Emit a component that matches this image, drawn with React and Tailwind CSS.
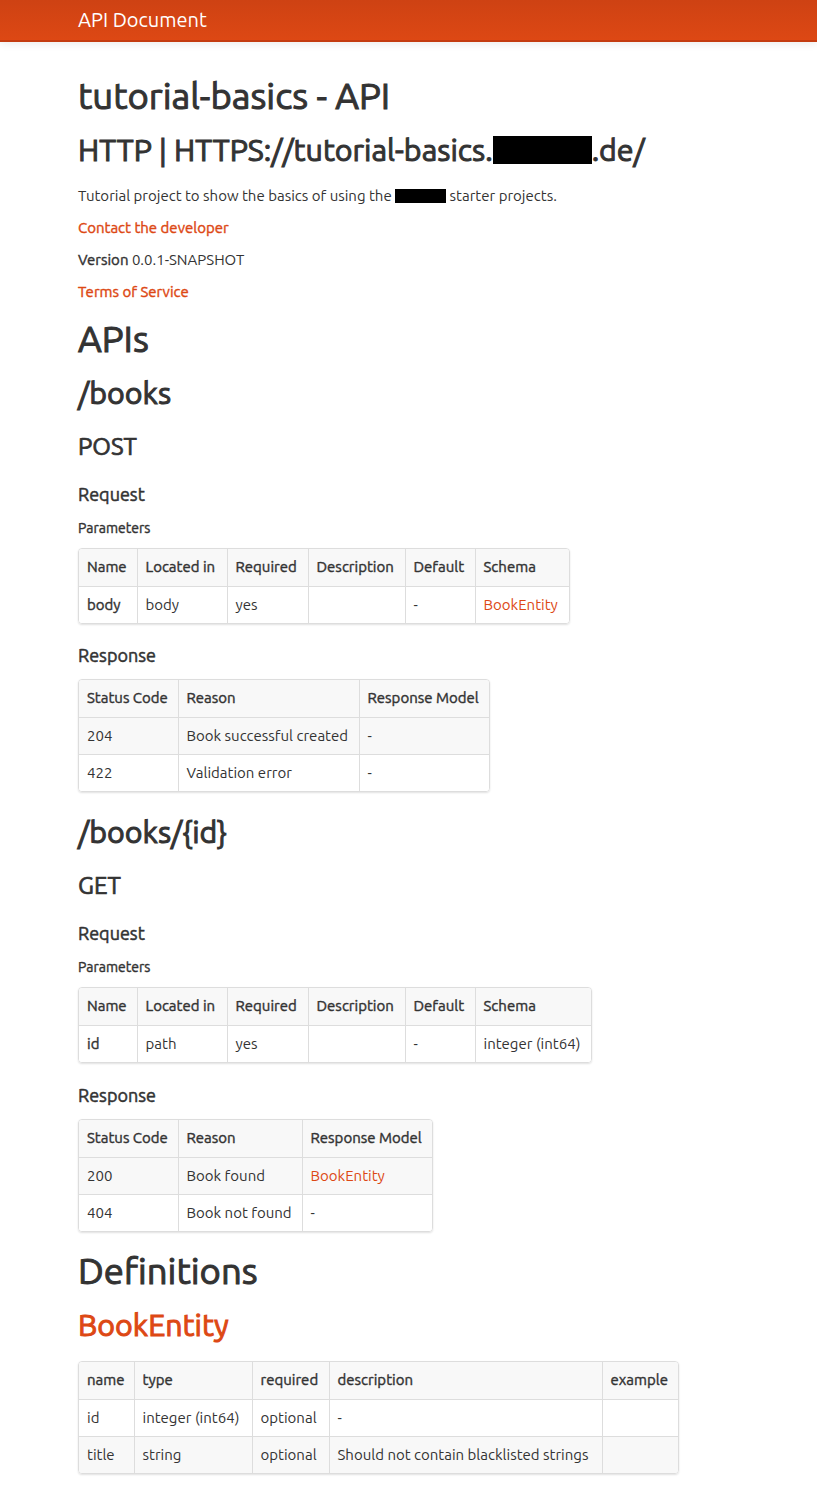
import React from 'react';

const FONT = "font-['Ubuntu','Open_Sans','Noto_Sans',sans-serif]";
// Ubuntu Medium is not installed, so medium weight is emulated with a thin stroke
const MED = '[-webkit-text-stroke:0.4px_currentColor]';
const MED_L = '[-webkit-text-stroke:1px_currentColor]';

const cell = (ci, ri) =>
  `h-[37px] px-2 align-middle text-left ${ci > 0 ? 'border-l' : ''} ${ri > 0 ? 'border-t' : ''} border-[#ddd]`;

function DataTable({ cols, head, rows, stripe = [] }) {
  return (
    <div className="w-fit rounded border border-[#ddd] overflow-hidden shadow-[0_1px_2px_rgba(0,0,0,0.12)]">
      <table className="table-fixed border-collapse text-[15px] leading-5">
        <colgroup>
          {cols.map((w, i) => (
            <col key={i} style={{ width: w }} />
          ))}
        </colgroup>
        <thead>
          <tr className="bg-[#f8f8f8]">
            {head.map((h, i) => (
              <th key={i} className={`${cell(i, 0)} font-normal ${MED} whitespace-nowrap`}>{h}</th>
            ))}
          </tr>
        </thead>
        <tbody>
          {rows.map((r, ri) => (
            <tr key={ri} className={stripe.includes(ri) ? 'bg-[#f8f8f8]' : 'bg-white'}>
              {r.map((c, ci) => (
                <td key={ci} className={`${cell(ci, ri + 1)} whitespace-nowrap`}>{c}</td>
              ))}
            </tr>
          ))}
        </tbody>
      </table>
    </div>
  );
}

const Link = ({ children }) => <span className="text-[#dd4814]">{children}</span>;

const H1 = ({ className = '', children }) => (
  <h1 className={`text-[36.5px] leading-10 ${MED_L} ${className}`}>{children}</h1>
);
const H2 = ({ className = '', children }) => (
  <h2 className={`text-[30.4px] leading-10 ${MED_L} ${className}`}>{children}</h2>
);
const H3 = ({ className = '', children }) => (
  <h3 className={`text-[24px] leading-10 [-webkit-text-stroke:0.7px_currentColor] ${className}`}>{children}</h3>
);
const H4 = ({ className = '', children }) => (
  <h4 className={`text-[18px] leading-5 [-webkit-text-stroke:0.5px_currentColor] ${className}`}>{children}</h4>
);
const H5 = ({ className = '', children }) => (
  <h5 className={`text-[14px] leading-5 ${MED} ${className}`}>{children}</h5>
);

export default function App() {
  return (
    <div className={`${FONT} min-h-[1509px] bg-white text-[#333] text-[15px]`}>
      <div className="h-[42px] bg-gradient-to-b from-[#ce4213] to-[#dd4814] border-b-2 border-[#c43c10] shadow-[0_2px_8px_rgba(0,0,0,0.08)] flex items-center px-[78px]">
        <span className="text-white text-[20px]">API Document</span>
      </div>

      <div className="px-[78px] pb-8">
        <H1 className="mt-[34px]">tutorial-basics - API</H1>
        <H2 className="mt-[14px]">
          HTTP | HTTPS://tutorial-basics.
          <span className="inline-block w-[99px] h-[28px] bg-black align-[-3px]"></span>
          .de/
        </H2>
        <p className="mt-4 leading-5">
          Tutorial project to show the basics of using the{' '}
          <span className="inline-block w-[51px] h-[14px] bg-black align-[-2px]"></span> starter projects.
        </p>
        <p className={`mt-3 leading-5 ${MED}`}><Link>Contact the developer</Link></p>
        <p className="mt-3 leading-5"><span className={MED}>Version</span> 0.0.1-SNAPSHOT</p>
        <p className={`mt-3 leading-5 ${MED}`}><Link>Terms of Service</Link></p>

        <H1 className="mt-[17px]">APIs</H1>
        <H2 className="mt-[14px]">/books</H2>
        <H3 className="mt-[14px]">POST</H3>
        <H4 className="mt-[17px]">Request</H4>
        <H5 className="mt-[14px]">Parameters</H5>
        <div className="mt-[10px]">
          <DataTable
            cols={[58, 90, 81, 97, 70, 94]}
            head={['Name', 'Located in', 'Required', 'Description', 'Default', 'Schema']}
            rows={[[<span className={MED}>body</span>, 'body', 'yes', '', '-', <Link>BookEntity</Link>]]}
          />
        </div>
        <H4 className="mt-[21px]">Response</H4>
        <div className="mt-[14px]">
          <DataTable
            cols={[99, 181, 130]}
            head={['Status Code', 'Reason', 'Response Model']}
            rows={[
              ['204', 'Book successful created', '-'],
              ['422', 'Validation error', '-'],
            ]}
            stripe={[0]}
          />
        </div>

        <H2 className="mt-[20px]">/books/&#123;id&#125;</H2>
        <H3 className="mt-[14px]">GET</H3>
        <H4 className="mt-[17px]">Request</H4>
        <H5 className="mt-[14px]">Parameters</H5>
        <div className="mt-[10px]">
          <DataTable
            cols={[58, 90, 81, 97, 70, 116]}
            head={['Name', 'Located in', 'Required', 'Description', 'Default', 'Schema']}
            rows={[[<span className={MED}>id</span>, 'path', 'yes', '', '-', 'integer (int64)']]}
          />
        </div>
        <H4 className="mt-[22px]">Response</H4>
        <div className="mt-[14px]">
          <DataTable
            cols={[99, 124, 130]}
            head={['Status Code', 'Reason', 'Response Model']}
            rows={[
              ['200', 'Book found', <Link>BookEntity</Link>],
              ['404', 'Book not found', '-'],
            ]}
            stripe={[0]}
          />
        </div>

        <H1 className="mt-[19px]">Definitions</H1>
        <H2 className="mt-[14px] text-[#dd4814]">BookEntity</H2>
        <div className="mt-[16px]">
          <DataTable
            cols={[55, 118, 77, 273, 76]}
            head={['name', 'type', 'required', 'description', 'example']}
            rows={[
              ['id', 'integer (int64)', 'optional', '-', ''],
              ['title', 'string', 'optional', 'Should not contain blacklisted strings', ''],
            ]}
            stripe={[1]}
          />
        </div>
      </div>
    </div>
  );
}
